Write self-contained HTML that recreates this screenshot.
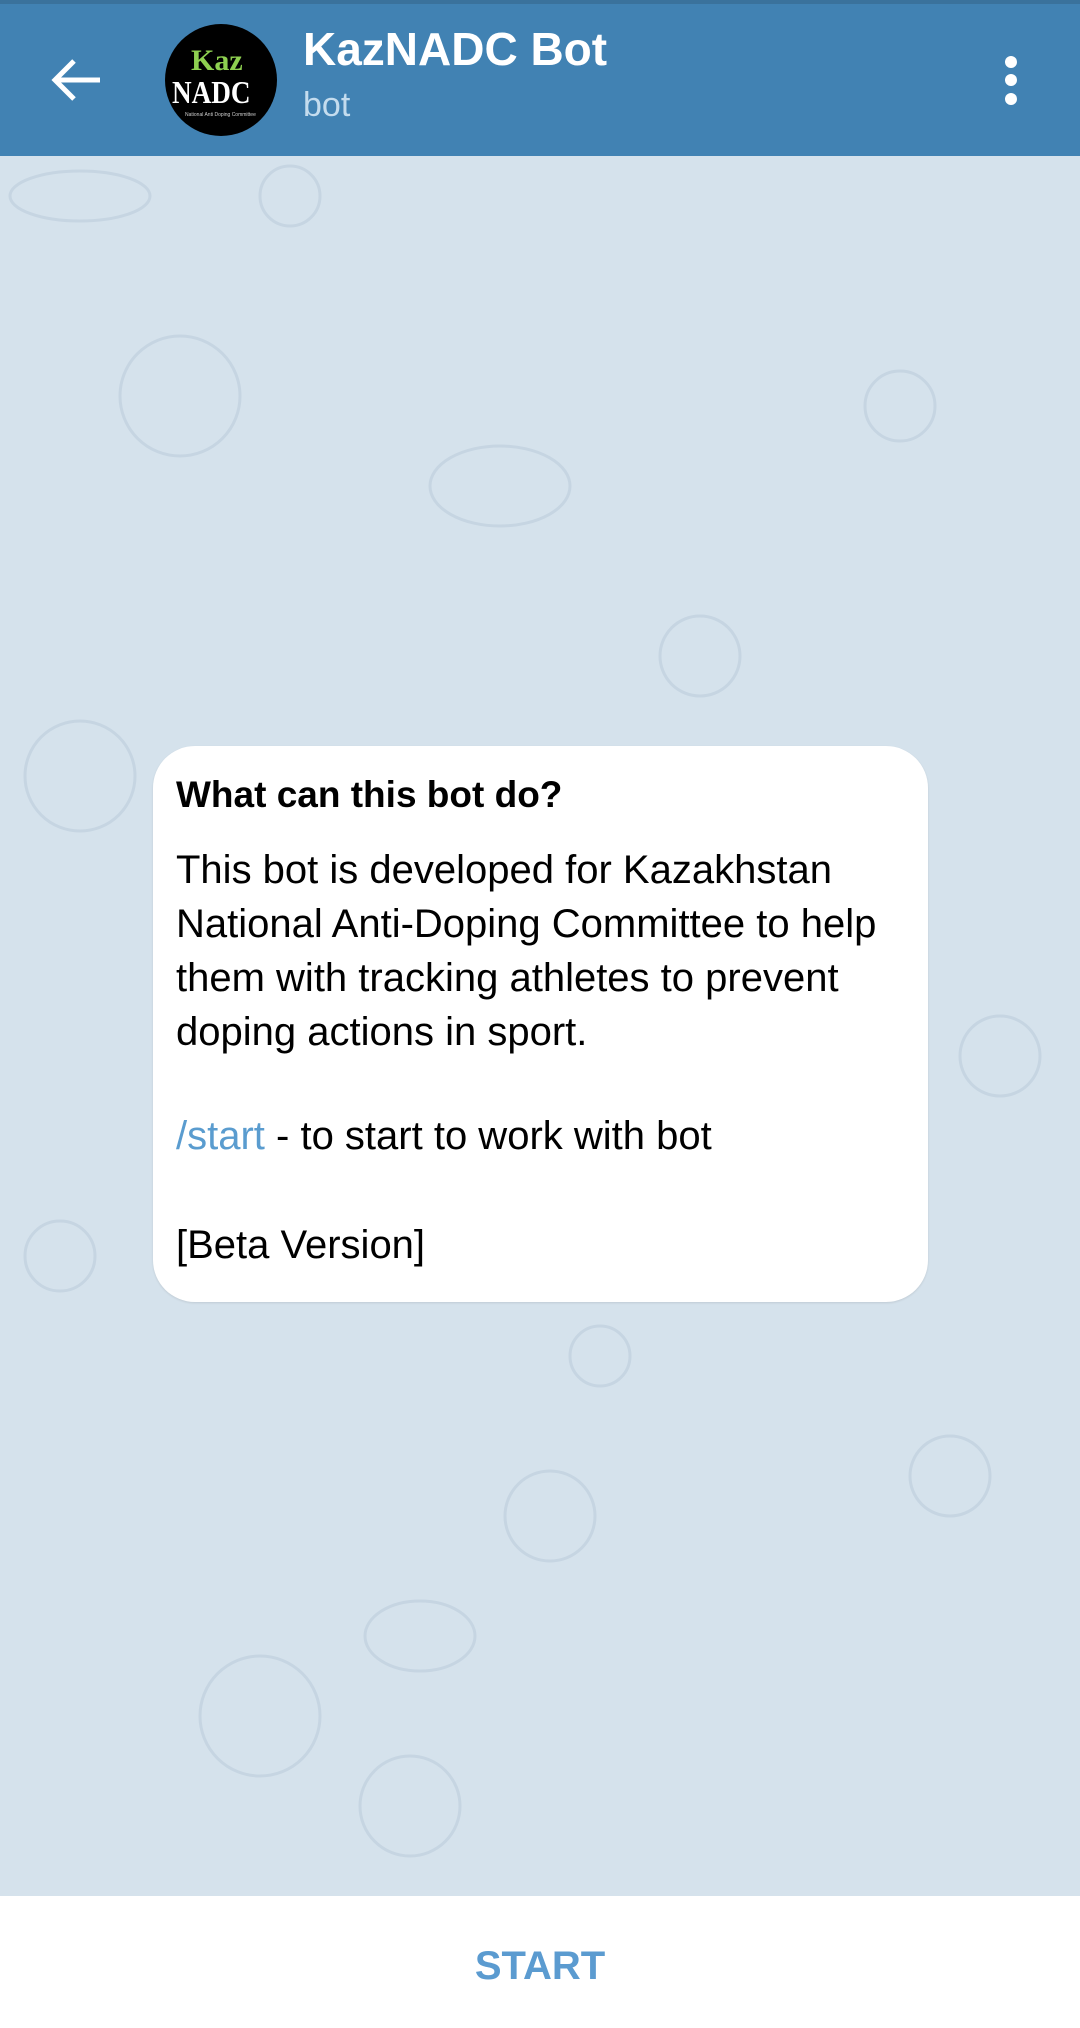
<!DOCTYPE html>
<html><head><meta charset="utf-8"><style>
*{margin:0;padding:0;box-sizing:border-box}
body{width:1080px;height:2028px;position:relative;background:#d5e2ec;font-family:"Liberation Sans",sans-serif;overflow:hidden}
.hdr{position:absolute;left:0;top:0;width:1080px;height:156px;background:#4182b3;border-top:4px solid #3a729c}
.t{position:absolute;white-space:nowrap}
.card{position:absolute;left:153px;top:746px;width:775px;height:556px;background:#fff;border-radius:42px;box-shadow:0 1px 2px rgba(0,0,0,.1)}
.bar{position:absolute;left:0;top:1896px;width:1080px;height:132px;background:#fff}
</style></head><body>
<svg style="position:absolute;left:0;top:156px" width="1080" height="1740" fill="none" stroke="#c6d5e2" stroke-width="3">
<circle cx="290" cy="40" r="30"/><circle cx="700" cy="500" r="40"/><circle cx="80" cy="620" r="55"/><circle cx="550" cy="1360" r="45"/>
<circle cx="950" cy="1320" r="40"/><circle cx="260" cy="1560" r="60"/><circle cx="600" cy="1200" r="30"/><circle cx="180" cy="240" r="60"/>
<circle cx="900" cy="250" r="35"/><circle cx="410" cy="1650" r="50"/><circle cx="1000" cy="900" r="40"/><circle cx="60" cy="1100" r="35"/>
<ellipse cx="80" cy="40" rx="70" ry="25"/><ellipse cx="500" cy="330" rx="70" ry="40"/><ellipse cx="420" cy="1480" rx="55" ry="35"/>
</svg>
<div class="hdr"></div>
<svg style="position:absolute;left:50px;top:56px" width="54" height="48" viewBox="0 0 54 48"><path d="M50 24H6M24 5L5 24l19 19" stroke="#fff" stroke-width="5" fill="none"/></svg>
<div style="position:absolute;left:165px;top:24px;width:112px;height:112px;border-radius:50%;background:#000"></div>
<div class="t" style="left:191px;top:44px;font:bold 30px 'Liberation Serif',serif;color:#8ed050">Kaz</div>
<div class="t" style="left:172px;top:74px;font:bold 32px 'Liberation Serif',serif;color:#fff;transform:scaleX(.85);transform-origin:left">NADC</div>
<div class="t" style="left:185px;top:112px;font:5px sans-serif;color:#ccc">National Anti Doping Committee</div>
<div class="t" style="left:303px;top:22px;font-size:46px;color:#fff;font-weight:bold">KazNADC Bot</div>
<div class="t" style="left:303px;top:86px;font-size:34px;color:#c4dcee">bot</div>
<div style="position:absolute;left:1005px;top:56px;width:12px;height:12px;border-radius:50%;background:#fff"></div>
<div style="position:absolute;left:1005px;top:74px;width:12px;height:12px;border-radius:50%;background:#fff"></div>
<div style="position:absolute;left:1005px;top:93px;width:12px;height:12px;border-radius:50%;background:#fff"></div>
<div class="card"></div>
<div class="t" style="left:176px;top:774px;font-size:37px;font-weight:bold;color:#000">What can this bot do?</div>
<div class="t" style="left:176px;top:843px;font-size:40px;line-height:54px;color:#000">This bot is developed for Kazakhstan<br>National Anti-Doping Committee to help<br>them with tracking athletes to prevent<br>doping actions in sport.</div>
<div class="t" style="left:176px;top:1114px;font-size:40px;color:#000"><span style="color:#5a9ccf">/start</span> - to start to work with bot</div>
<div class="t" style="left:176px;top:1223px;font-size:40px;color:#000">[Beta Version]</div>
<div class="bar"></div>
<div class="t" style="left:0;width:1080px;text-align:center;top:1944px;font-size:40px;font-weight:bold;color:#5b9bd0">START</div>
</body></html>
